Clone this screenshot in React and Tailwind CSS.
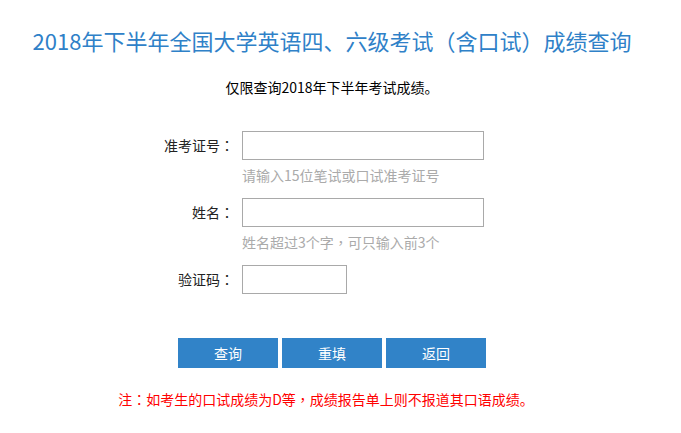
import React from 'react';

const font = { fontFamily: '"Noto Sans CJK SC", "Microsoft YaHei", sans-serif' };
const punct = 'font-["Noto_Sans_CJK_TC",sans-serif]';

const Row = ({ label, inputClass, hint }) => (
  <div className="flex items-start">
    <label className="w-[242px] pr-[8px] text-right text-[14px] leading-[29px] text-[#222]">
      {label}
      <span className={punct}>：</span>
    </label>
    <div>
      <input className={`h-[29px] border border-[#a9a9a9] bg-white outline-none ${inputClass}`} />
      {hint && (
        <p className="mt-[6px] text-[14px] leading-[18px] text-[#aaaaaa]">{hint}</p>
      )}
    </div>
  </div>
);

const App = () => {
  return (
    <div className="min-h-[433px] w-[681px] bg-white" style={font}>
      <div className="w-[664px] text-center">
        <h1 className="pt-[25px] text-[22px] leading-[30px] font-normal text-[#2f81c8]">
          2018年下半年全国大学英语四、六级考试<span className={punct}>（</span>含口试<span className={punct}>）</span>成绩查询
        </h1>
        <p className="mt-[22px] text-[14px] leading-[20px] text-black">
          仅限查询2018年下半年考试成绩。
        </p>
      </div>

      <div className="mt-[34px] flex flex-col gap-[14px]">
        <Row label="准考证号" inputClass="w-[242px]" hint="请输入15位笔试或口试准考证号" />
        <Row
          label="姓名"
          inputClass="w-[242px]"
          hint={<>姓名超过3个字<span className={punct}>，</span>可只输入前3个</>}
        />
        <Row label="验证码" inputClass="w-[105px]" />
      </div>

      <div className="mt-[44px] flex gap-[4px] pl-[178px]">
        {['查询', '重填', '返回'].map((t) => (
          <button
            key={t}
            className="h-[30px] w-[100px] bg-[#3183c8] text-[14px] text-white"
          >
            {t}
          </button>
        ))}
      </div>

      <p className="mt-[21px] w-[652px] text-center text-[14px] leading-[20px] text-[#ff0000]">
        注<span className={punct}>：</span>如考生的口试成绩为D等<span className={punct}>，</span>成绩报告单上则不报道其口语成绩。
      </p>
    </div>
  );
};

export default App;
